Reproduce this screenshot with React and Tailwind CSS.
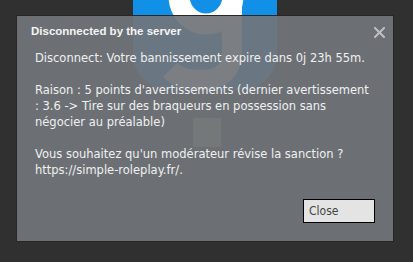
const Logo = () => (
  <div className="absolute left-[133px] top-[-110px] w-[144px] h-[200px] rounded-[36px] bg-[#1290e8] overflow-hidden">
    <svg width="144" height="200" viewBox="0 0 144 200" className="block">
      {/* the "g" of the logo, drawn as strokes */}
      <g transform="translate(-133 110)" fill="none" stroke="#ffffff">
        <ellipse cx="206" cy="-4" rx="27" ry="28" strokeWidth="21" />
        <path d="M232 -30 V52 Q232 80 200 80 Q180 80 170 70" strokeWidth="20" />
      </g>
    </svg>
  </div>
);

const CloseIcon = () => (
  <svg width="11" height="11" viewBox="0 0 11 11" className="block mt-[2px]">
    <path d="M1 1 L10 10 M10 1 L1 10" stroke="#bfbfbf" strokeWidth="2" strokeLinecap="square" />
  </svg>
);

export default function App() {
  return (
    <div className="relative w-[413px] h-[262px] overflow-hidden bg-[#303030] font-['DejaVu_Sans',sans-serif]">
      <Logo />
      {/* faint item behind the dialog */}
      <div className="absolute left-[193px] top-[118px] w-[28px] h-[29px] bg-[#a89f55]" />

      <div className="relative ml-4 mt-[15px] w-[378px] h-[227px] flex flex-col border border-[#262626] bg-[rgba(113,117,123,0.93)]">
        {/* Header */}
        <div className="flex items-center justify-between pl-[14px] pr-[8px] pt-[7px]">
          <span className="text-[11.5px] leading-4 font-bold text-[#f4f4f4] font-['Liberation_Sans',sans-serif]">
            Disconnected by the server
          </span>
          <CloseIcon />
        </div>

        {/* Message */}
        <div className="pl-[18px] pt-[11px] text-[11.5px] leading-4 text-[#f0f0f0] font-['DejaVu_Sans',sans-serif]">
          <p>Disconnect: Votre bannissement expire dans 0j 23h 55m.</p>
          <p className="h-4" />
          <p>Raison : 5 points d'avertissements (dernier avertissement</p>
          <p>: 3.6 -&gt; Tire sur des braqueurs en possession sans</p>
          <p>négocier au préalable)</p>
          <p className="h-4" />
          <p>Vous souhaitez qu'un modérateur révise la sanction ?</p>
          <p>https://simple-roleplay.fr/.</p>
        </div>

        {/* Footer */}
        <div className="mt-auto flex justify-end pr-[18px] pb-[18px]">
          <button
            type="button"
            className="w-[72px] h-[24px] border border-black bg-[#e4e4e4] pl-[5px] text-left text-[12px] text-[#444444] font-['DejaVu_Sans_Condensed','DejaVu_Sans',sans-serif]"
          >
            Close
          </button>
        </div>
      </div>
    </div>
  );
}
